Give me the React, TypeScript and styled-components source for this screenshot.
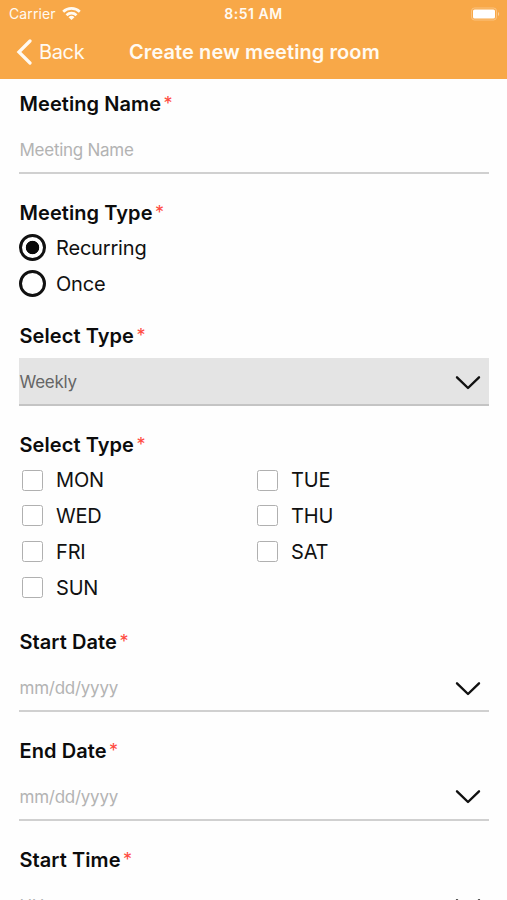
import React, { useState } from "react";
import styled, { createGlobalStyle } from "styled-components";

const GlobalStyle = createGlobalStyle`
  *, *::before, *::after { box-sizing: border-box; }
  html, body { margin: 0; height: 100%; overflow: hidden; background: #fff; }
  body { font-family: Inter, "Liberation Sans", sans-serif; color: #111; }
`;

const Screen = styled.div`
  width: 100%;
  height: 900px;
  overflow: hidden;
  background: #fefefe;
`;

const Header = styled.header`
  height: 79px;
  background: #f8a848;
  color: #fffaf2;
`;

const StatusBar = styled.div`
  display: grid;
  grid-template-columns: 1fr auto 1fr;
  align-items: center;
  height: 27px;
  padding: 0 7px 0 9px;
  font-size: 14px;
`;

const Carrier = styled.div`
  display: flex;
  align-items: center;
  gap: 6px;
  letter-spacing: 0.1px;
`;

const Clock = styled.div`
  margin-left: -2px;
  font-weight: 600;
  letter-spacing: 0.5px;
`;

const BatterySlot = styled.div`
  display: flex;
  justify-content: flex-end;
`;

const NavBar = styled.div`
  display: grid;
  grid-template-columns: 129px 1fr;
  align-items: center;
  height: 50px;
`;

const BackButton = styled.button`
  display: flex;
  align-items: center;
  gap: 7px;
  padding: 0 0 0 16px;
  border: 0;
  background: none;
  color: inherit;
  font: 400 20px/24px Inter, sans-serif;
  letter-spacing: -0.35px;
`;

const Title = styled.h1`
  margin: 0;
  font-size: 20px;
  font-weight: 600;
  line-height: 24px;
  letter-spacing: 0.09px;
  white-space: nowrap;
`;

const Form = styled.form`
  display: flex;
  flex-direction: column;
  padding: 11px 18px 0 19px;
`;

const Group = styled.section<{ $gap: number }>`
  flex: none;
  margin-bottom: ${(p) => p.$gap}px;
`;

const Label = styled.div`
  display: flex;
  height: 28px;
  padding-left: 0.5px;
  color: #0c0c0c;
  font-size: 20px;
  font-weight: 600;
  line-height: 28px;
  letter-spacing: 0.07px;
`;

const Required = styled.span`
  margin-left: 2.5px;
  color: #ff4a40;
  font-size: 18px;
  font-weight: 400;
  line-height: 28px;
`;

const Field = styled.div<{ $filled?: boolean }>`
  display: flex;
  align-items: center;
  justify-content: space-between;
  height: 48px;
  margin-top: 8px;
  padding-right: 8px;
  border-bottom: 2px solid ${(p) => (p.$filled ? "#c4c4c4" : "#d0d0d0")};
  background: ${(p) => (p.$filled ? "#e4e4e4" : "transparent")};
  color: ${(p) => (p.$filled ? "#666" : "#b3b3b3")};
  font-size: 17px;
  letter-spacing: -0.26px;

  svg { margin-top: 2px; }
`;

const FieldValue = styled.span`
  padding: 2px 0 0 0.5px;
`;

const Options = styled.div<{ $columns: number }>`
  display: grid;
  grid-template-columns: repeat(${(p) => p.$columns}, 235px);
  grid-auto-rows: 35.9px;
  padding-top: 3px;
`;

const Option = styled.label`
  display: flex;
  align-items: center;
  font-size: 20px;
  letter-spacing: -0.18px;
`;

const Radio = styled.input`
  appearance: none;
  flex: none;
  width: 27px;
  height: 27px;
  margin: 0 10px 0 0;
  border: 3px solid #111;
  border-radius: 50%;
  background: #fff;
  &:checked { background: radial-gradient(circle, #0a0a0a 6.3px, #fff 7.1px); }
`;

const Checkbox = styled.input`
  appearance: none;
  flex: none;
  width: 21px;
  height: 21px;
  margin: 0 13px 0 3px;
  border: 1.5px solid #b0b0b0;
  border-radius: 2.5px;
  background: #fff;
  &:checked { background: #111; }
`;

const WifiIcon = () => (
  <svg width="19" height="14" viewBox="0 0 19 14" fill="none" stroke="currentColor" strokeWidth="2.7">
    <path d="M1.2 4.7a12 12 0 0 1 16.6 0" />
    <path d="M4.5 8.2a7.2 7.2 0 0 1 10 0" />
    <path d="M9.5 13.1 6.5 10.2a4.3 4.3 0 0 1 6 0Z" fill="currentColor" stroke="none" />
  </svg>
);

const BatteryIcon = () => (
  <svg width="31" height="14" viewBox="0 0 31 14" fill="none">
    <rect x="2.5" y="1" width="25" height="12" rx="3" stroke="#fff" strokeOpacity=".3" />
    <rect x="4" y="2.5" width="22" height="9" rx="1.6" fill="#fff" />
    <path d="M29 5v4c1.6-.6 1.6-3.4 0-4Z" fill="#fff" fillOpacity=".45" />
  </svg>
);

const BackIcon = () => (
  <svg width="16" height="26" viewBox="0 0 16 26" fill="none" stroke="currentColor" strokeWidth="3.2" strokeLinecap="round">
    <path d="M14 2 2.9 13 14 24" />
  </svg>
);

const ChevronDown = () => (
  <svg width="26" height="15" viewBox="0 0 26 15" fill="none" stroke="#111" strokeWidth="2.4" strokeLinecap="round" strokeLinejoin="round">
    <path d="M2 2.3 13 13 24 2.3" />
  </svg>
);

const FieldLabel = ({ children }: { children: React.ReactNode }) => (
  <Label>
    {children}
    <Required>*</Required>
  </Label>
);

const DropdownField = ({ label, value, filled }: { label: string; value: string; filled?: boolean }) => (
  <Group $gap={24.8}>
    <FieldLabel>{label}</FieldLabel>
    <Field $filled={filled}>
      <FieldValue>{value}</FieldValue>
      <ChevronDown />
    </Field>
  </Group>
);

const days = ["MON", "TUE", "WED", "THU", "FRI", "SAT", "SUN"];

export default function App() {
  const [kind, setKind] = useState("Recurring");
  return (
    <Screen>
      <GlobalStyle />
      <Header>
        <StatusBar>
          <Carrier>
            Carrier
            <WifiIcon />
          </Carrier>
          <Clock>8:51 AM</Clock>
          <BatterySlot>
            <BatteryIcon />
          </BatterySlot>
        </StatusBar>
        <NavBar>
          <BackButton type="button">
            <BackIcon />
            Back
          </BackButton>
          <Title>Create new meeting room</Title>
        </NavBar>
      </Header>
      <Form>
        <Group $gap={25}>
          <FieldLabel>Meeting Name</FieldLabel>
          <Field>
            <FieldValue>Meeting Name</FieldValue>
          </Field>
        </Group>
        <Group $gap={20.5}>
          <FieldLabel>Meeting Type</FieldLabel>
          <Options $columns={1}>
            {["Recurring", "Once"].map((name) => (
              <Option key={name}>
                <Radio type="radio" name="kind" checked={kind === name} onChange={() => setKind(name)} />
                {name}
              </Option>
            ))}
          </Options>
        </Group>
        <DropdownField label="Select Type" value="Weekly" filled />
        <Group $gap={22.5}>
          <FieldLabel>Select Type</FieldLabel>
          <Options $columns={2}>
            {days.map((day) => (
              <Option key={day}>
                <Checkbox type="checkbox" />
                {day}
              </Option>
            ))}
          </Options>
        </Group>
        <DropdownField label="Start Date" value="mm/dd/yyyy" />
        <DropdownField label="End Date" value="mm/dd/yyyy" />
        <DropdownField label="Start Time" value="HH:mm" />
      </Form>
    </Screen>
  );
}
